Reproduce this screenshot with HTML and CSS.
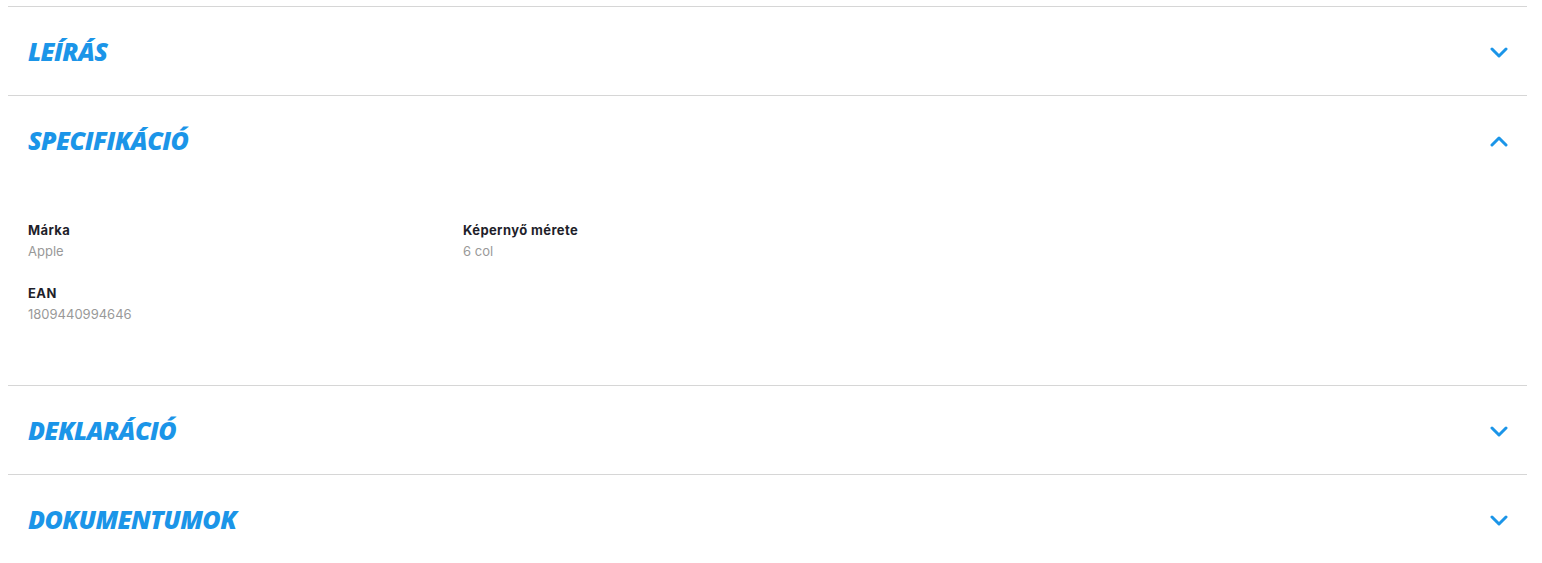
FILE: index.html
```html
<!DOCTYPE html>
<html lang="hu">
<head>
<meta charset="utf-8">
<title>Termék</title>
<link rel="stylesheet" href="styles.css">
</head>
<body>
<div class="accordion">
  <div class="item">
    <div class="head">
      <h2 class="title">LEÍRÁS</h2>
      <svg class="chev" width="18" height="11" viewBox="0 0 18 11"><polyline points="2,2 9,9 16,2" fill="none" stroke="currentColor" stroke-width="3" stroke-linecap="round" stroke-linejoin="round"/></svg>
    </div>
  </div>
  <div class="item">
    <div class="head">
      <h2 class="title">SPECIFIKÁCIÓ</h2>
      <svg class="chev" width="18" height="11" viewBox="0 0 18 11"><polyline points="2,9 9,2 16,9" fill="none" stroke="currentColor" stroke-width="3" stroke-linecap="round" stroke-linejoin="round"/></svg>
    </div>
    <div class="body">
      <div class="spec">
        <div class="label">Márka</div>
        <div class="value">Apple</div>
      </div>
      <div class="spec">
        <div class="label">Képernyő mérete</div>
        <div class="value">6 col</div>
      </div>
      <div class="spec">
        <div class="label">EAN</div>
        <div class="value">1809440994646</div>
      </div>
    </div>
  </div>
  <div class="item">
    <div class="head">
      <h2 class="title">DEKLARÁCIÓ</h2>
      <svg class="chev" width="18" height="11" viewBox="0 0 18 11"><polyline points="2,2 9,9 16,2" fill="none" stroke="currentColor" stroke-width="3" stroke-linecap="round" stroke-linejoin="round"/></svg>
    </div>
  </div>
  <div class="item">
    <div class="head">
      <h2 class="title">DOKUMENTUMOK</h2>
      <svg class="chev" width="18" height="11" viewBox="0 0 18 11"><polyline points="2,2 9,9 16,2" fill="none" stroke="currentColor" stroke-width="3" stroke-linecap="round" stroke-linejoin="round"/></svg>
    </div>
  </div>
</div>
</body>
</html>
```
FILE: styles.css
```css
html, body {
  margin: 0;
  padding: 0;
  background: #fff;
}
body {
  padding: 6px 0 0 8px;
  font-family: "Inter", "Noto Sans", sans-serif;
}
.accordion {
  width: 1519px;
}
.item {
  border-top: 1px solid #d6d6d6;
}
.head {
  height: 88px;
  display: flex;
  align-items: center;
  justify-content: space-between;
  padding: 0 19px 0 20px;
}
.title {
  margin: 0;
  font-family: "Open Sans", "Noto Sans", sans-serif;
  font-style: italic;
  font-weight: 800;
  font-size: 25px;
  letter-spacing: -0.6px;
  color: #1b95e8;
}
.chev {
  color: #1b95e8;
  display: block;
  margin-top: 3px;
}
.body {
  display: grid;
  grid-template-columns: 435px 435px;
  row-gap: 21px;
  padding: 36px 20px 60px;
}
.label {
  font-size: 13px;
  font-weight: 700;
  color: #1f1f2b;
  line-height: 20px;
  letter-spacing: 0.4px;
}
.value {
  font-size: 13px;
  color: #999;
  line-height: 22px;
}
```
